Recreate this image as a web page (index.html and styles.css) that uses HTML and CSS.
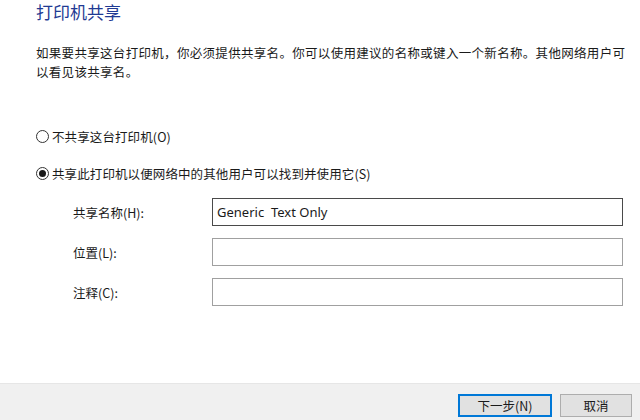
FILE: index.html
```html
<!DOCTYPE html>
<html lang="zh-CN">
<head>
<meta charset="utf-8">
<title>打印机共享</title>
<link rel="stylesheet" href="styles.css">
</head>
<body>
<div class="page">
  <div class="content">
    <h1 class="title">打印机共享</h1>
    <p class="desc">如果要共享这台打印机，你必须提供共享名。你可以使用建议的名称或键入一个新名称。其他网络用户可<br>以看见该共享名。</p>
    <div class="radio-row first">
      <span class="radio"></span>
      <span class="radio-label">不共享这台打印机(O)</span>
    </div>
    <div class="radio-row second">
      <span class="radio checked"></span>
      <span class="radio-label">共享此打印机以便网络中的其他用户可以找到并使用它(S)</span>
    </div>
    <div class="form">
      <label class="label">共享名称(H):</label>
      <input class="field focused" type="text" value="Generic  Text Only">
      <label class="label">位置(L):</label>
      <input class="field" type="text" value="">
      <label class="label">注释(C):</label>
      <input class="field" type="text" value="">
    </div>
  </div>
  <div class="footer">
    <button class="btn primary">下一步(N)</button>
    <button class="btn cancel">取消</button>
  </div>
</div>
</body>
</html>
```

FILE: styles.css
```css
html, body {
  margin: 0;
  padding: 0;
  background: #ffffff;
}
body {
  font-family: "Noto Sans CJK SC", sans-serif;
  color: #1a1a1a;
}
.page {
  width: 640px;
  height: 420px;
  display: flex;
  flex-direction: column;
  overflow: hidden;
}
.content {
  padding-left: 36px;
}
.title {
  margin: 0;
  font-family: "Noto Sans CJK SC", sans-serif;
  font-size: 17px;
  line-height: 23px;
  font-weight: normal;
  color: #1f3a93;
}
.desc {
  margin: 20px 0 0 0;
  font-family: "Noto Sans CJK SC", sans-serif;
  font-size: 12.5px;
  letter-spacing: 0.31px;
  line-height: 19px;
  white-space: nowrap;
}
.radio-row {
  display: flex;
  align-items: center;
  height: 20px;
  font-family: "Noto Sans CJK SC", sans-serif;
  font-size: 12.5px;
  letter-spacing: 0.1px;
}
.radio-row.first {
  margin-top: 45px;
}
.radio-row.second {
  margin-top: 17px;
}
.radio {
  box-sizing: border-box;
  width: 13px;
  height: 13px;
  border: 1px solid #333333;
  border-radius: 50%;
  margin-right: 3px;
  display: flex;
  align-items: center;
  justify-content: center;
  background: #ffffff;
}
.radio.checked::after {
  content: "";
  width: 7px;
  height: 7px;
  border-radius: 50%;
  background: #1a1a1a;
}
.form {
  margin-top: 15px;
  padding-left: 37px;
  display: grid;
  grid-template-columns: 139px 411px;
  row-gap: 12px;
  align-items: center;
}
.label {
  font-family: "Noto Sans CJK SC", sans-serif;
  font-size: 12.5px;
}
.field {
  box-sizing: border-box;
  height: 28px;
  margin: 0;
  padding: 0 4px;
  border: 1px solid #a0a0a0;
  background: #ffffff;
  font-family: "Noto Sans", "Noto Sans CJK SC", sans-serif;
  font-size: 13px;
  color: #1a1a1a;
  outline: none;
}
.field.focused {
  border-color: #4a4a4a;
}
.footer {
  margin-top: auto;
  height: 37px;
  box-sizing: border-box;
  background: #f0f0f0;
  border-top: 1px solid #e6e6e6;
  display: flex;
  justify-content: flex-end;
  align-items: flex-start;
  padding: 10px 8px 0 0;
  gap: 8px;
}
.btn {
  box-sizing: border-box;
  height: 23px;
  margin: 0;
  padding: 0;
  background: #e1e1e1;
  border: 1px solid #adadad;
  font-family: "Noto Sans CJK SC", sans-serif;
  font-size: 12.5px;
  color: #1a1a1a;
  line-height: 19px;
}
.btn.primary {
  width: 94px;
  border: 2px solid #0078d7;
}
.btn.cancel {
  width: 72px;
}
```
